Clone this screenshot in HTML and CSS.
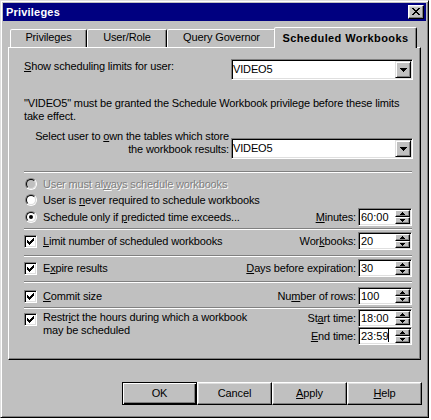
FILE: index.html
```html
<!DOCTYPE html>
<html>
<head>
<meta charset="utf-8">
<title>Privileges</title>
<link rel="stylesheet" href="styles.css">
</head>
<body>
<div class="window">
  <div class="titlebar">
    <span class="title">Privileges</span>
    <span class="close"><svg width="8" height="7" viewBox="0 0 8 7" shape-rendering="crispEdges"><path d="M0 0h2v1H0zM6 0h2v1H6zM1 1h2v1H1zM5 1h2v1H5zM2 2h4v1H2zM3 3h2v1H3zM2 4h4v1H2zM1 5h2v1H1zM5 5h2v1H5zM0 6h2v1H0zM6 6h2v1H6z"/></svg></span>
  </div>

  <div class="tabs">
    <div class="tab t1">Privileges</div>
    <div class="tab t2">User/Role</div>
    <div class="tab t3">Query Governor</div>
    <div class="tab sel">Scheduled Workbooks</div>
  </div>

  <div class="panel">
    <div class="r-show">
      <span class="lbl"><u>S</u>how scheduling limits for user:</span>
      <span class="combo"><span class="val">VIDEO5</span><span class="drop"><svg width="7" height="4" viewBox="0 0 7 4" shape-rendering="crispEdges"><path d="M0 0h7v1H0zM1 1h5v1H1zM2 2h3v1H2zM3 3h1v1H3z"/></svg></span></span>
    </div>

    <p class="note">"VIDEO5" must be granted the Schedule Workbook privilege before these limits take effect.</p>

    <div class="r-owner">
      <span class="lbl">Select user to <u>o</u>wn the tables which store<br>the workbook results:</span>
      <span class="combo"><span class="val">VIDEO5</span><span class="drop"><svg width="7" height="4" viewBox="0 0 7 4" shape-rendering="crispEdges"><path d="M0 0h7v1H0zM1 1h5v1H1zM2 2h3v1H2zM3 3h1v1H3z"/></svg></span></span>
    </div>

    <div class="sec sec-radios">
      <div class="opt dis"><span class="radio"><i></i></span><span>User must al<u>w</u>ays schedule workbooks</span></div>
      <div class="opt"><span class="radio"><i></i></span><span>User is <u>n</u>ever required to schedule workbooks</span></div>
      <div class="opt o3"><span class="radio on"><i></i></span><span>Schedule only if <u>p</u>redicted time exceeds...</span>
        <span class="field"><span class="flbl"><u>M</u>inutes:</span>
          <span class="spin"><span class="v">60:00</span><span class="ud"><b><svg width="5" height="3" viewBox="0 0 5 3" shape-rendering="crispEdges"><path d="M2 0h1v1H2zM1 1h3v1H1zM0 2h5v1H0z"/></svg></b><b><svg width="5" height="3" viewBox="0 0 5 3" shape-rendering="crispEdges"><path d="M0 0h5v1H0zM1 1h3v1H1zM2 2h1v1H2z"/></svg></b></span></span>
        </span>
      </div>
    </div>

    <div class="sec sec-limit">
      <div class="row"><span class="chk"><svg width="7" height="7" viewBox="0 0 7 7" shape-rendering="crispEdges"><path d="M6 0h1v1H6zM5 1h2v1H5zM0 2h1v1H0zM4 2h3v1H4zM0 3h2v1H0zM3 3h3v1H3zM0 4h5v1H0zM1 5h3v1H1zM2 6h1v1H2z"/></svg></span><span><u>L</u>imit number of scheduled workbooks</span>
        <span class="field"><span class="flbl">Wor<u>k</u>books:</span>
          <span class="spin"><span class="v">20</span><span class="ud"><b><svg width="5" height="3" viewBox="0 0 5 3" shape-rendering="crispEdges"><path d="M2 0h1v1H2zM1 1h3v1H1zM0 2h5v1H0z"/></svg></b><b><svg width="5" height="3" viewBox="0 0 5 3" shape-rendering="crispEdges"><path d="M0 0h5v1H0zM1 1h3v1H1zM2 2h1v1H2z"/></svg></b></span></span>
        </span>
      </div>
    </div>

    <div class="sec sec-expire">
      <div class="row"><span class="chk"><svg width="7" height="7" viewBox="0 0 7 7" shape-rendering="crispEdges"><path d="M6 0h1v1H6zM5 1h2v1H5zM0 2h1v1H0zM4 2h3v1H4zM0 3h2v1H0zM3 3h3v1H3zM0 4h5v1H0zM1 5h3v1H1zM2 6h1v1H2z"/></svg></span><span>E<u>x</u>pire results</span>
        <span class="field"><span class="flbl"><u>D</u>ays before expiration:</span>
          <span class="spin"><span class="v">30</span><span class="ud"><b><svg width="5" height="3" viewBox="0 0 5 3" shape-rendering="crispEdges"><path d="M2 0h1v1H2zM1 1h3v1H1zM0 2h5v1H0z"/></svg></b><b><svg width="5" height="3" viewBox="0 0 5 3" shape-rendering="crispEdges"><path d="M0 0h5v1H0zM1 1h3v1H1zM2 2h1v1H2z"/></svg></b></span></span>
        </span>
      </div>
    </div>

    <div class="sec sec-commit">
      <div class="row"><span class="chk"><svg width="7" height="7" viewBox="0 0 7 7" shape-rendering="crispEdges"><path d="M6 0h1v1H6zM5 1h2v1H5zM0 2h1v1H0zM4 2h3v1H4zM0 3h2v1H0zM3 3h3v1H3zM0 4h5v1H0zM1 5h3v1H1zM2 6h1v1H2z"/></svg></span><span><u>C</u>ommit size</span>
        <span class="field"><span class="flbl">Nu<u>m</u>ber of rows:</span>
          <span class="spin"><span class="v">100</span><span class="ud"><b><svg width="5" height="3" viewBox="0 0 5 3" shape-rendering="crispEdges"><path d="M2 0h1v1H2zM1 1h3v1H1zM0 2h5v1H0z"/></svg></b><b><svg width="5" height="3" viewBox="0 0 5 3" shape-rendering="crispEdges"><path d="M0 0h5v1H0zM1 1h3v1H1zM2 2h1v1H2z"/></svg></b></span></span>
        </span>
      </div>
    </div>

    <div class="sec sec-restrict">
      <div class="rrow">
        <span class="chk"><svg width="7" height="7" viewBox="0 0 7 7" shape-rendering="crispEdges"><path d="M6 0h1v1H6zM5 1h2v1H5zM0 2h1v1H0zM4 2h3v1H4zM0 3h2v1H0zM3 3h3v1H3zM0 4h5v1H0zM1 5h3v1H1zM2 6h1v1H2z"/></svg></span>
        <span class="rtext">Restr<u>i</u>ct the hours during which a workbook<br>may be scheduled</span>
        <span class="times">
          <span class="flbl">St<u>a</u>rt time:</span>
          <span class="spin"><span class="v">18:00</span><span class="ud"><b><svg width="5" height="3" viewBox="0 0 5 3" shape-rendering="crispEdges"><path d="M2 0h1v1H2zM1 1h3v1H1zM0 2h5v1H0z"/></svg></b><b><svg width="5" height="3" viewBox="0 0 5 3" shape-rendering="crispEdges"><path d="M0 0h5v1H0zM1 1h3v1H1zM2 2h1v1H2z"/></svg></b></span></span>
          <span class="flbl"><u>E</u>nd time:</span>
          <span class="spin"><span class="v">23:59<i class="caret"></i></span><span class="ud"><b><svg width="5" height="3" viewBox="0 0 5 3" shape-rendering="crispEdges"><path d="M2 0h1v1H2zM1 1h3v1H1zM0 2h5v1H0z"/></svg></b><b><svg width="5" height="3" viewBox="0 0 5 3" shape-rendering="crispEdges"><path d="M0 0h5v1H0zM1 1h3v1H1zM2 2h1v1H2z"/></svg></b></span></span>
        </span>
      </div>
    </div>
  </div>

  <div class="buttons">
    <span class="btn def">OK</span>
    <span class="btn">Cancel</span>
    <span class="btn"><u>A</u>pply</span>
    <span class="btn"><u>H</u>elp</span>
  </div>
</div>
</body>
</html>
```
FILE: styles.css
```css
* { box-sizing: border-box; }
html, body { margin: 0; padding: 0; }
body {
  width: 431px;
  height: 420px;
  overflow: hidden;
  background: #ffffff;
  font-family: "Liberation Sans", Arial, sans-serif;
  font-size: 11px;
  line-height: 13px;
  letter-spacing: -0.15px;
  color: #000;
}
u { text-decoration: underline; text-underline-offset: 1px; }

.window {
  width: 429px;
  height: 418px;
  background: #c0c0c0;
  border: 1px solid;
  border-color: #dfdfdf #000 #000 #dfdfdf;
  box-shadow: inset 1px 1px #fff, inset -1px -1px #808080;
  padding: 2px;
  display: flex;
  flex-direction: column;
}

.titlebar {
  height: 18px;
  flex: none;
  background: #000080;
  color: #fff;
  display: flex;
  align-items: center;
  justify-content: space-between;
  padding-left: 3px;
  font-weight: bold;
  letter-spacing: 0.2px;
}
.close {
  width: 16px;
  height: 14px;
  margin-right: 2px;
  background: #c0c0c0;
  border: 1px solid;
  border-color: #fff #000 #000 #fff;
  box-shadow: inset -1px -1px #808080, inset 1px 1px #dfdfdf;
}
.close svg { display: block; margin: 2px 0 0 3px; }

.tabs {
  display: flex;
  align-items: flex-end;
  height: 20px;
  flex: none;
  margin: 6px 0 0 7px;
}
.tab {
  height: 18px;
  flex: none;
  background: #c0c0c0;
  border: 1px solid;
  border-bottom: 0;
  border-color: #fff #000 transparent #fff;
  border-radius: 2px 2px 0 0;
  box-shadow: inset -1px 0 #808080;
  padding-top: 1px;
  text-align: center;
  white-space: nowrap;
}
.t1 { width: 77px; }
.t2 { width: 80px; }
.t3 { width: 109px; }
.sel {
  width: 143px;
  height: 21px;
  margin: 0 -2px -1px -2px;
  padding-top: 4px;
  font-weight: bold;
  letter-spacing: 0.4px;
  position: relative;
  z-index: 1;
}

.panel {
  flex: none;
  margin-left: 5px;
  width: 413px;
  height: 313px;
  border: 1px solid;
  border-color: #fff #000 #000 #fff;
  box-shadow: inset -1px -1px #808080;
  padding: 11px 8px 0 15px;
}

.r-show {
  display: flex;
  justify-content: space-between;
  align-items: flex-start;
}
.r-show .lbl { margin-top: 1px; }

.combo {
  width: 182px;
  height: 21px;
  flex: none;
  margin-right: -1px;
  display: flex;
  background: #fff;
  border: 1px solid;
  border-color: #808080 #fff #fff #808080;
  box-shadow: inset 1px 1px #000, inset -1px -1px #dfdfdf;
  padding: 1px;
}
.combo .val { flex: 1; padding: 2px 0 0 0; }
.drop {
  width: 16px;
  height: 17px;
  background: #c0c0c0;
  border: 1px solid;
  border-color: #dfdfdf #000 #000 #dfdfdf;
  box-shadow: inset 1px 1px #fff, inset -1px -1px #808080;
  display: flex;
  align-items: center;
  justify-content: center;
}
.drop svg { display: block; }

.note { margin: 17px 0 0; }

.r-owner {
  display: flex;
  align-items: flex-start;
  margin-top: 7px;
}
.r-owner .lbl { flex: 1; text-align: right; padding-right: 2px; }
.r-owner .combo { margin-top: 8px; }

.sec {
  border-top: 1px solid #808080;
  box-shadow: inset 0 1px #fff;
}
.sec-radios { margin-top: 12px; padding: 4px 0 2px; }
.sec-limit { padding: 3px 0 5px; }
.sec-expire { padding: 3px 0 4px; }
.sec-commit { padding: 5px 0 2px; }
.sec-restrict { padding: 1px 0 0; }

.opt { display: flex; align-items: center; height: 16px; white-space: nowrap; }
.opt.o3 { height: 18px; }
.row { display: flex; align-items: center; height: 18px; white-space: nowrap; }

.dis { color: #808080; text-shadow: 1px 1px 0 #fff; }

.radio {
  width: 12px;
  height: 12px;
  flex: none;
  margin: 0 6px 0 1px;
  border-radius: 50%;
  border: 1px solid;
  border-color: #808080 #fff #fff #808080;
  display: flex;
  align-items: center;
  justify-content: center;
}
.radio i {
  width: 10px;
  height: 10px;
  border-radius: 50%;
  border: 1px solid;
  border-color: #000 #dfdfdf #dfdfdf #000;
  background: #fff;
  display: flex;
  align-items: center;
  justify-content: center;
}
.dis .radio i { background: #c0c0c0; }
.radio.on i::after {
  content: "";
  width: 4px;
  height: 4px;
  border-radius: 50%;
  background: #000;
}

.chk {
  width: 13px;
  height: 13px;
  flex: none;
  margin-right: 6px;
  background: #fff;
  border: 1px solid;
  border-color: #808080 #fff #fff #808080;
  box-shadow: inset 1px 1px #000, inset -1px -1px #dfdfdf;
  display: flex;
  align-items: center;
  justify-content: center;
}
.chk svg { display: block; }

.field {
  margin-left: auto;
  display: flex;
  align-items: center;
  gap: 2px;
}

.spin {
  width: 54px;
  height: 18px;
  flex: none;
  display: flex;
  background: #fff;
  border: 1px solid;
  border-color: #808080 #fff #fff #808080;
  box-shadow: inset 1px 1px #000, inset -1px -1px #dfdfdf;
}
.spin .v {
  flex: 1;
  padding-left: 2px;
  line-height: 16px;
  letter-spacing: 0;
}
.ud {
  width: 15px;
  margin: 1px 1px 1px 0;
  display: flex;
  flex-direction: column;
}
.ud b {
  flex: 1;
  background: #c0c0c0;
  border: 1px solid;
  border-color: #fff #000 #000 #fff;
  box-shadow: inset -1px -1px #808080;
  display: flex;
  align-items: center;
  justify-content: center;
}
.ud svg { display: block; }
.caret {
  display: inline-block;
  width: 1px;
  height: 13px;
  background: #000;
  vertical-align: -2px;
  margin-left: -1px;
}

.rrow { display: flex; align-items: flex-start; }
.rrow .chk { margin-top: 4px; }
.rtext { margin-top: 2px; white-space: nowrap; }
.times {
  margin-left: auto;
  display: grid;
  grid-template-columns: auto 54px;
  grid-auto-rows: 18px;
  column-gap: 2px;
}
.times .flbl { text-align: right; align-self: center; }

.buttons {
  display: flex;
  justify-content: flex-end;
  margin: 22px 4px 0 0;
}
.btn {
  width: 75px;
  height: 23px;
  flex: none;
  border: 1px solid;
  border-color: #fff #000 #000 #fff;
  box-shadow: inset -1px -1px #808080, inset 1px 1px #dfdfdf;
  display: flex;
  align-items: center;
  justify-content: center;
}
.btn.def {
  border-color: #000;
  box-shadow: inset 1px 1px #fff, inset -1px -1px #000, inset -2px -2px #808080;
}
```
